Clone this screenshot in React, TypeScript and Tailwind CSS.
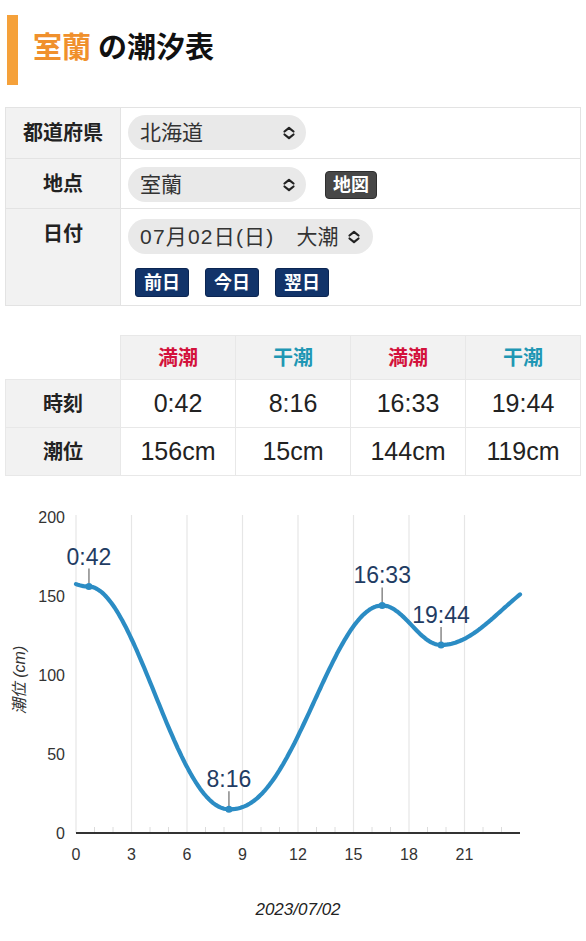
import React from "react";

const tides = [
  { kind: "満潮", time: "0:42", level: "156cm", high: true },
  { kind: "干潮", time: "8:16", level: "15cm", high: false },
  { kind: "満潮", time: "16:33", level: "144cm", high: true },
  { kind: "干潮", time: "19:44", level: "119cm", high: false },
];

// chart scale (page pixels)
const X0 = 76;
const PX_H = 18.5;
const Y0 = 831;
const PX_CM = 1.58;
const hx = (h: number) => X0 + h * PX_H;
const vy = (v: number) => Y0 - v * PX_CM;

// extremes in hours / cm, plus the next high after midnight
const extremes: { t: number; v: number; skew: number }[] = [
  { t: 0.7, v: 156, skew: 0.95 },
  { t: 8.27, v: 15, skew: 1.12 },
  { t: 16.55, v: 144, skew: 1 },
  { t: 19.73, v: 119, skew: 1 },
  { t: 26.3, v: 163, skew: 1 },
];

function level(t: number) {
  if (t <= extremes[0].t) {
    const k = (extremes[0].t - t) / extremes[0].t;
    return extremes[0].v + 1.5 * k * k;
  }
  for (let i = 0; i < extremes.length - 1; i++) {
    const a = extremes[i];
    const b = extremes[i + 1];
    if (t <= b.t) {
      const f = Math.pow((t - a.t) / (b.t - a.t), a.skew);
      return a.v + (b.v - a.v) * (1 - Math.cos(Math.PI * f)) / 2;
    }
  }
  return extremes[extremes.length - 1].v;
}

function curvePath() {
  const pts: string[] = [];
  for (let t = 0; t <= 24.0001; t += 0.1) {
    pts.push(`${hx(t).toFixed(1)} ${vy(level(t)).toFixed(1)}`);
  }
  return "M" + pts.join(" L");
}

const marks = tides.map((t) => {
  const [h, m] = t.time.split(":").map(Number);
  const hr = h + m / 60;
  return { label: t.time, x: hx(hr), y: vy(parseInt(t.level)) };
});

function UpDown() {
  return (
    <svg width="14" height="14" viewBox="0 0 14 14" fill="none" stroke="#222" strokeWidth="2.2" strokeLinecap="round" strokeLinejoin="round">
      <path d="M2.5 5.5L7 1.8l4.5 3.7M2.5 8.5L7 12.2l4.5-3.7" />
    </svg>
  );
}

function NavButton({ children }: { children: React.ReactNode }) {
  return (
    <button className="h-[29px] px-[8px] rounded-[3px] bg-[#12346a] border border-[#0b2552] text-white text-[18px] font-bold leading-none">
      {children}
    </button>
  );
}

function TideChart() {
  const major = [0, 3, 6, 9, 12, 15, 18, 21];
  const minor = Array.from({ length: 23 }, (_, i) => i + 1).filter((h) => h % 3 !== 0);
  return (
    <svg width="586" height="451" viewBox="0 490 586 451" className="block">
      {major.map((h) => (
        <line key={h} x1={hx(h)} x2={hx(h)} y1={513} y2={Y0} stroke="#e6e6e6" strokeWidth="1.2" />
      ))}
      {minor.map((h) => (
        <line key={h} x1={hx(h)} x2={hx(h)} y1={Y0 - 6} y2={Y0} stroke="#dcdcdc" strokeWidth="1" />
      ))}
      <line x1={X0} x2={520} y1={Y0} y2={Y0} stroke="#333" strokeWidth="2" />

      {[0, 50, 100, 150, 200].map((v) => (
        <text key={v} x={65} y={vy(v) + 6} textAnchor="end" fontSize="16" fill="#333">
          {v}
        </text>
      ))}
      {major.map((h) => (
        <text key={h} x={hx(h)} y={858} textAnchor="middle" fontSize="16" fill="#333">
          {h}
        </text>
      ))}
      <text x={25} y={678} transform="rotate(-90 25 678)" textAnchor="middle" fontSize="16" fontStyle="italic" fill="#333">
        潮位 (cm)
      </text>
      <text x={298} y={913} textAnchor="middle" fontSize="17" fontStyle="italic" fill="#222">
        2023/07/02
      </text>

      <path d={curvePath()} fill="none" stroke="#2b8cc4" strokeWidth="4.2" strokeLinecap="round" strokeLinejoin="round" />
      {marks.map((m) => (
        <g key={m.label}>
          <line x1={m.x} x2={m.x} y1={m.y - 3} y2={m.y - 18} stroke="#888" strokeWidth="1.5" />
          <circle cx={m.x} cy={m.y} r="3.5" fill="#2b8cc4" />
          <text x={m.x} y={m.y - 22} textAnchor="middle" fontSize="23" fill="#1f3c63">
            {m.label}
          </text>
        </g>
      ))}
    </svg>
  );
}

export default function App() {
  const labelCell =
    "w-[115px] bg-[#f2f2f2] border border-[#e3e3e3] align-top pt-[11px] text-[20px] font-bold leading-[28px] text-[#222]";
  return (
    <div className="w-[586px] bg-white font-['Liberation_Sans','Noto_Sans_CJK_JP',sans-serif] text-[#222]">
      {/* title */}
      <div className="flex items-center pt-[15px]">
        <div className="ml-[7px] w-[11px] h-[70px] bg-[#f5a13a]" />
        <h1 className="ml-[15px] text-[29px] font-bold leading-none -mt-[4px]">
          <span className="text-[#f0902c]">室蘭</span>
          <span className="ml-[7px] text-[#111]">の潮汐表</span>
        </h1>
      </div>

      {/* form */}
      <table className="mt-[22px] ml-[5px] w-[576px] border-collapse">
        <tbody>
          <tr className="h-[51px]">
            <th className={labelCell}>都道府県</th>
            <td className="border border-[#e3e3e3] align-top pt-[7px] px-[7px]">
              <div className="inline-flex items-center justify-between h-[35px] w-[178px] rounded-full bg-[#e9e9e9] pl-[12px] pr-[10px] text-[21px] text-[#333]">
                北海道
                <UpDown />
              </div>
            </td>
          </tr>
          <tr className="h-[50px]">
            <th className={labelCell}>地点</th>
            <td className="border border-[#e3e3e3] align-top pt-[8px] px-[7px]">
              <div className="flex items-center gap-[19px]">
                <div className="inline-flex items-center justify-between h-[35px] w-[178px] rounded-full bg-[#e9e9e9] pl-[12px] pr-[10px] text-[21px] text-[#333]">
                  室蘭
                  <UpDown />
                </div>
                <button className="h-[28px] px-[7px] rounded-[4px] bg-[#474747] border border-[#2e2e2e] text-white text-[18px] font-bold leading-none">
                  地図
                </button>
              </div>
            </td>
          </tr>
          <tr className="h-[97px]">
            <th className={labelCell}>日付</th>
            <td className="border border-[#e3e3e3] align-top pt-[10px] px-[7px] pb-[8px]">
              <div className="inline-flex items-center h-[35px] rounded-full bg-[#e9e9e9] pl-[12px] pr-[12px] text-[21px] text-[#333]">
                <span className="tracking-[1.2px]">07月02日(日)</span>
                <span className="ml-[22px]">大潮</span>
                <span className="ml-[8px]">
                  <UpDown />
                </span>
              </div>
              <div className="mt-[14px] ml-[7px] flex gap-[16px]">
                <NavButton>前日</NavButton>
                <NavButton>今日</NavButton>
                <NavButton>翌日</NavButton>
              </div>
            </td>
          </tr>
        </tbody>
      </table>

      {/* tide times */}
      <table className="mt-[29px] ml-[5px] w-[576px] border-collapse table-fixed">
        <thead>
          <tr className="h-[44px]">
            <th className="w-[115px]" />
            {tides.map((t, i) => (
              <th
                key={i}
                className={`bg-[#f2f2f2] border border-[#e8e8e8] text-[20px] font-bold ${
                  t.high ? "text-[#d3123c]" : "text-[#1f97b4]"
                }`}
              >
                {t.kind}
              </th>
            ))}
          </tr>
        </thead>
        <tbody>
          <tr className="h-[48px]">
            <th className="bg-[#f2f2f2] border border-[#e8e8e8] text-[20px] font-bold">時刻</th>
            {tides.map((t, i) => (
              <td key={i} className="border border-[#e8e8e8] text-center text-[25px] text-[#222]">
                {t.time}
              </td>
            ))}
          </tr>
          <tr className="h-[48px]">
            <th className="bg-[#f2f2f2] border border-[#e8e8e8] text-[20px] font-bold">潮位</th>
            {tides.map((t, i) => (
              <td key={i} className="border border-[#e8e8e8] text-center text-[25px] text-[#222]">
                {t.level}
              </td>
            ))}
          </tr>
        </tbody>
      </table>

      <div className="mt-[16px]">
        <TideChart />
      </div>
    </div>
  );
}
